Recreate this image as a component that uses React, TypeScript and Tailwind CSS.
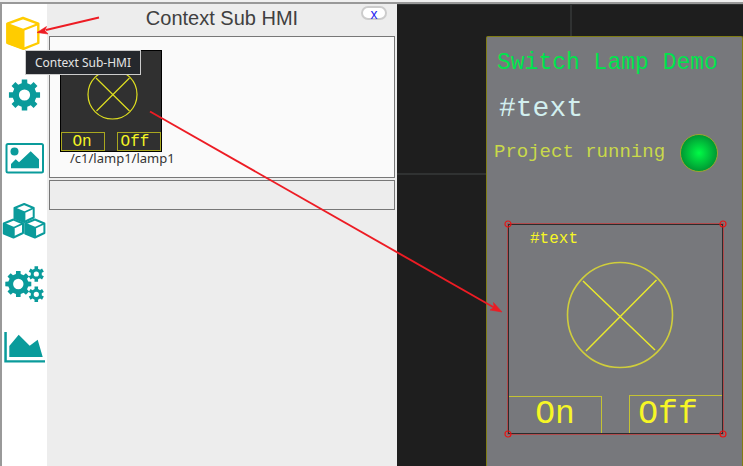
import type { ReactNode } from "react";

const TEAL = "#0a9b9b";

function gearPath(cx: number, cy: number, outer: number, body: number, hole: number, teeth: number) {
  const step = (Math.PI * 2) / teeth;
  const points: string[] = [];
  for (let i = 0; i < teeth; i++) {
    const a = i * step - Math.PI / 2;
    const corners: [number, number][] = [
      [a - step * 0.3, body],
      [a - step * 0.22, outer],
      [a + step * 0.22, outer],
      [a + step * 0.3, body],
    ];
    for (const [t, r] of corners) {
      points.push(`${(cx + r * Math.cos(t)).toFixed(2)} ${(cy + r * Math.sin(t)).toFixed(2)}`);
    }
  }
  return `M${points.join("L")}ZM${cx - hole} ${cy}a${hole} ${hole} 0 1 0 ${hole * 2} 0a${hole} ${hole} 0 1 0 ${-hole * 2} 0Z`;
}

function MiniCube({ x, y }: { x: number; y: number }) {
  return (
    <g transform={`translate(${x} ${y})`} strokeLinejoin="round">
      <path d="M11.5 1.5L21 5.5V15L11.5 19.5L1.8 15.5V5.5Z" fill="#fff" stroke={TEAL} strokeWidth="2" />
      <path d="M1.8 5.5L11.8 10V19.500L1.8 15.5Z" fill={TEAL} />
      <path d="M1.8 5.5L11.8 9.8L21 5.5M11.8 9.8V19" fill="none" stroke={TEAL} strokeWidth="1.8" />
    </g>
  );
}

const tools: { name: string; icon: ReactNode }[] = [
  {
    name: "Context Sub-HMI",
    icon: (
      <g stroke="#fc0" strokeLinejoin="round">
        <path d="M21 9L36.3 14.6V34L21.5 39.8L5.4 33.8V14.6Z" fill="#fff" strokeWidth="2.4" />
        <path d="M5.4 15L21.5 21V39.5L5.4 33.8Z" fill="#fc0" strokeWidth="2" />
        <path d="M21.5 20.8L36.3 15" fill="none" strokeWidth="2.2" />
      </g>
    ),
  },
  { name: "Settings", icon: <path d={gearPath(22.5, 23, 15.8, 12, 5.6, 8)} fill={TEAL} fillRule="evenodd" /> },
  {
    name: "Images",
    icon: (
      <g fill={TEAL}>
        <rect x="4.5" y="9" width="36.5" height="28.5" rx="1.5" fill="none" stroke={TEAL} strokeWidth="2" />
        <circle cx="12.5" cy="16.5" r="4" />
        <path d="M9 33.3V29L13.7 24.3L17 27.3L28.7 16.3L37 24.3V33.3Z" />
      </g>
    ),
  },
  {
    name: "Objects",
    icon: (
      <g>
        <MiniCube x={10.7} y={4.5} />
        <MiniCube x={0} y={20} />
        <MiniCube x={21.4} y={20} />
      </g>
    ),
  },
  {
    name: "Services",
    icon: (
      <g fill={TEAL} fillRule="evenodd">
        <path d={gearPath(16.3, 23, 13.2, 10.2, 5.2, 8)} />
        <path d={gearPath(34.3, 13, 7.9, 5.6, 2.6, 6)} />
        <path d={gearPath(34.3, 33.3, 7.9, 5.6, 2.6, 6)} />
      </g>
    ),
  },
  {
    name: "Charts",
    icon: (
      <g fill={TEAL}>
        <path d="M2.3 8H4.8V36.2H43V38.6H2.3Z" />
        <path d="M7.3 33V22L16.7 10.7L27.7 21.7L35.7 15.7L40.7 33Z" />
      </g>
    ),
  },
];

function Toolbar() {
  return (
    <nav className="flex w-[45px] shrink-0 flex-col gap-[15px] bg-white pt-[5px]">
      {tools.map((tool) => (
        <button key={tool.name} type="button" aria-label={tool.name} className="block h-12 w-full">
          <svg viewBox="0 0 45 48" className="block h-12 w-[45px]">
            {tool.icon}
          </svg>
        </button>
      ))}
    </nav>
  );
}

function SubHmiPanel() {
  return (
    <aside className="flex w-[350px] shrink-0 flex-col bg-[#ededed] px-0.5">
      <header className="grid h-8 grid-cols-[1fr_auto_1fr] items-start pr-2">
        <span />
        <h1 className="pl-2 text-[20px] leading-7 text-[#404040]">Context Sub HMI</h1>
        <button
          type="button"
          aria-label="Close"
          className="mt-0.5 flex h-3.5 w-[26px] items-center justify-center justify-self-end rounded-full border-2 border-[#ccc] bg-white pt-0.5 text-[14px] leading-3 text-[#2a2af0]"
        >
          x
        </button>
      </header>
      <section className="h-[142px] border border-[#777] bg-[#fafafa] pt-[13px] pl-2.5">
        <figure className="w-[102px]">
          <div className="flex h-[102px] flex-col justify-between border border-black bg-[#303030]">
            <svg viewBox="0 0 100 80" className="h-20 w-full" fill="none" stroke="#dede20" strokeWidth="1.2">
              <circle cx="51.5" cy="43.5" r="24.5" />
              <path d="M35 27L68.5 60M68.500 27L35.500 60" />
            </svg>
            <div className="flex justify-between font-['Liberation_Mono',monospace] text-[16px] leading-4 text-[#f4f424]">
              <span className="flex h-[19px] w-11 items-center justify-center border border-[#a9a71f] pr-0.5">On</span>
              <span className="flex h-[19px] w-11 items-center justify-center border border-[#a9a71f] pr-2">Off</span>
            </div>
          </div>
          <figcaption className="-mt-0.5 pl-2.5 font-['Noto_Sans',sans-serif] text-[13px] leading-4 whitespace-nowrap text-[#333]">
            /c1/lamp1/lamp1
          </figcaption>
        </figure>
      </section>
      <section className="mt-0.5 h-[30px] border border-[#777]" />
    </aside>
  );
}

const handles = [
  [4, 4],
  [219, 4],
  [4, 214],
  [219, 214],
];

function LampWidget() {
  return (
    <div className="absolute top-[183px] left-[17px] h-[218px] w-[223px] text-[#f6f626]">
      <svg viewBox="0 0 223 218" className="absolute inset-0 h-full w-full" fill="none">
        <circle cx="116" cy="95" r="52.5" stroke="#cfcd3c" strokeWidth="1.6" />
        <path d="M79 61L151 130M152.500 60L82 131" stroke="#e9e92c" strokeWidth="1.500" />
      </svg>
      <span className="absolute top-[9px] left-[26px] text-[16px] leading-5">#text</span>
      <button
        type="button"
        className="absolute top-[176px] left-[4px] flex h-[38px] w-[94px] items-center justify-center border border-[#c4c234] text-[33px] leading-8"
      >
        On
      </button>
      <button
        type="button"
        className="absolute top-[175px] left-[125px] flex h-[39px] w-[94px] items-center justify-center border border-[#c4c234] pr-4 text-[33px] leading-8"
      >
        Off
      </button>
      <svg viewBox="0 0 223 218" className="pointer-events-none absolute inset-0 h-full w-full" fill="none">
        <rect x="3.500" y="3.500" width="216" height="211" stroke="#b04a4c" />
        <rect x="4.500" y="4.500" width="214" height="209" stroke="#2c2c2c" />
        {handles.map(([x, y]) => (
          <circle key={`${x}-${y}`} cx={x} cy={y} r="3" stroke="#e81414" strokeWidth="1.200" />
        ))}
      </svg>
    </div>
  );
}

function Canvas() {
  return (
    <main className="relative min-w-0 flex-1 overflow-hidden border-t border-[#303232] bg-[#1e1e1e]">
      <div className="absolute inset-y-0 left-[173px] w-0.5 bg-[#303232]" />
      <div className="absolute inset-x-0 top-[168px] h-0.5 bg-[#303232]" />
      <div className="absolute top-[31px] right-0 bottom-0 left-[89px] rounded-t-xs border border-b-0 border-[#7f7c15] bg-[#77787c] font-['Liberation_Mono',monospace]">
        <h2 className="absolute top-[12px] left-[10px] text-[23px] leading-7 whitespace-nowrap text-[#00e44d]">
          Switch Lamp Demo
        </h2>
        <p className="absolute top-[56px] left-[12px] text-[28px] leading-8 text-[#d2efef]">#text</p>
        <p className="absolute top-[103px] left-[7px] text-[19px] leading-6 whitespace-nowrap text-[#c9d94a]">
          Project running
        </p>
        <div className="absolute top-[97px] left-[193px] size-[38px] rounded-full border border-[#9aa52e] bg-[radial-gradient(circle,#00fa46_0%,#009a33_70%)]" />
        <LampWidget />
      </div>
    </main>
  );
}

function Arrows() {
  return (
    <svg
      viewBox="0 0 743 466"
      className="pointer-events-none absolute top-0 left-0 h-[466px] w-[743px]"
      fill="#ed1c24"
      stroke="#ed1c24"
    >
      <path d="M99 17.500L46 30" strokeWidth="1.800" />
      <path d="M37 32.500L46.500 26.500L45 30.500L48 34Z" strokeWidth="0.600" />
      <path d="M150 111.500L494 307.500" strokeWidth="1.900" />
      <path d="M502 312L493.500 302.500L494 307.500L490 310Z" strokeWidth="0.600" />
    </svg>
  );
}

export default function App() {
  return (
    <div className="relative flex h-screen flex-col overflow-hidden border-t-2 border-[#f0f0f0] bg-white font-['Liberation_Sans',Arial,sans-serif]">
      <div className="flex min-h-0 flex-1 border-t-2 border-l-2 border-[#999]">
        <Toolbar />
        <SubHmiPanel />
        <Canvas />
      </div>
      <div className="absolute -top-0.5 left-0">
        <Arrows />
      </div>
      <div
        role="tooltip"
        className="absolute top-[48px] left-[25px] border border-[#ccc] bg-[#25282d] px-[9px] font-['Noto_Sans',sans-serif] text-[12px] leading-[23px] whitespace-nowrap text-[#e4e4e4]"
      >
        Context Sub-HMI
      </div>
    </div>
  );
}
